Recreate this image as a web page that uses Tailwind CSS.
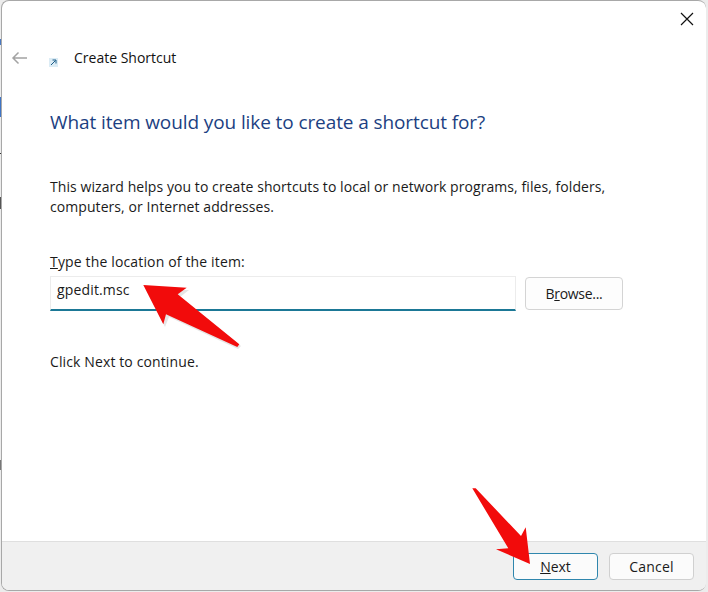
<!DOCTYPE html>
<html lang="en">

<head>
    <meta charset="UTF-8">
    <title>Create Shortcut</title>
    <script src="https://cdn.jsdelivr.net/npm/@tailwindcss/browser@4"></script>
</head>

<body class="bg-[#ececec] w-[708px] h-[592px] overflow-hidden relative font-['Open_Sans','Noto_Sans',sans-serif]">
    <!-- bits of the desktop showing at the left edge -->
    <div class="absolute left-0 top-[39px] w-[2px] h-[6px] bg-[#4a78c0]"></div>
    <div class="absolute left-0 top-[97px] w-[2px] h-[20px] bg-[#3f74c4]"></div>
    <div class="absolute left-0 top-[153px] w-[2px] h-[1px] bg-[#333]"></div>
    <div class="absolute left-0 top-[197px] w-[2px] h-[12px] bg-[#555]"></div>
    <div class="absolute left-0 top-[460px] w-[2px] h-[10px] bg-[#777]"></div>

    <div class="ml-[1px] w-[705px] h-[591px] bg-white rounded-lg border border-[#a8a8a8] border-r-0 flex flex-col overflow-hidden relative">
        <div class="flex justify-end pt-[11px] pr-[12px] h-[40px]">
            <svg width="14" height="14" viewBox="0 0 14 14" fill="none" stroke="#111" stroke-width="1.2">
                <path d="M1 1 L13 13 M13 1 L1 13" />
            </svg>
        </div>

        <div class="flex items-center h-[33px]">
            <svg class="ml-[9px]" width="17" height="14" viewBox="0 0 17 14" fill="none" stroke="#a3a3a3" stroke-width="1.5">
                <path d="M16 7 H2 M7.5 1.5 L2 7 L7.5 12.5" />
            </svg>
            <svg class="ml-[21px] mt-[10px]" width="9" height="9" viewBox="0 0 9 9">
                <rect width="9" height="9" fill="#dcecf5" />
                <path d="M2 7 L6.5 2.5 M3.5 2 H7 V5.5" fill="none" stroke="#1d5f8a" stroke-width="1" />
            </svg>
            <span class="ml-[16px] text-[14px] text-[#111]">Create Shortcut</span>
        </div>

        <div class="pl-[48px] flex-1">
            <h1 class="mt-[33px] text-[19px] leading-[30px] text-[#1c3f82] tracking-[-0.1px]">What item would you like to create a shortcut for?</h1>
            <p class="mt-[40px] text-[14px] leading-[20px] text-[#1a1a1a] tracking-[0.07px]">This wizard helps you to create shortcuts to local or network programs, files, folders,<br>computers, or Internet addresses.</p>
            <p class="mt-[35px] text-[14px] leading-[20px] text-[#1a1a1a] tracking-[0.15px]"><span class="underline">T</span>ype the location of the item:</p>
            <div class="mt-[4px] flex gap-[9px]">
                <div class="w-[466px] h-[35px] border border-[#ececec] border-b-2 border-b-[#1b7896] pl-[6px] text-[14px] leading-[26px] text-[#1a1a1a] tracking-[0.15px]">gpedit.msc</div>
                <button class="w-[98px] h-[33px] mt-[1px] bg-[#fdfdfd] border border-[#d4d4d4] rounded-[4px] text-[14px] text-[#1a1a1a] tracking-[-0.3px]">B<span class="underline">r</span>owse...</button>
            </div>
            <p class="mt-[41px] text-[14px] leading-[20px] text-[#1a1a1a] tracking-[0.12px]">Click Next to continue.</p>
        </div>

        <div class="h-[49px] bg-[#f0f0f0] border-t border-[#dfdfdf] flex justify-end gap-[11px] pt-[11px] pr-[12px]">
            <button class="w-[85px] h-[27px] bg-[#fbfbfb] border border-[#2f86ad] rounded-[4px] text-[14px] text-[#1a1a1a]"><span class="underline">N</span>ext</button>
            <button class="w-[85px] h-[27px] bg-[#fbfbfb] border border-[#d0d0d0] rounded-[4px] text-[14px] text-[#1a1a1a] tracking-[0.2px]">Cancel</button>
        </div>
    </div>

    <!-- annotation arrows drawn over the dialog -->
    <svg class="absolute inset-0" width="708" height="592" viewBox="0 0 708 592">
        <polygon points="146,290 165,327 169,317 238,349 241,346 180,297 189,290" fill="#a8a8a8" fill-opacity="0.3" />
        <polygon points="143.3,285 186.7,287.7 177.7,294.3 239.3,344.3 237.3,347 166,314.3 163.3,324.3" fill="#f20b0b" />
        <polygon points="472.3,488.3 475.7,488.3 521,536 525.7,527.3 530,564 496,549.3 508.3,548.3" fill="#f20b0b" />
    </svg>
</body>

</html>
